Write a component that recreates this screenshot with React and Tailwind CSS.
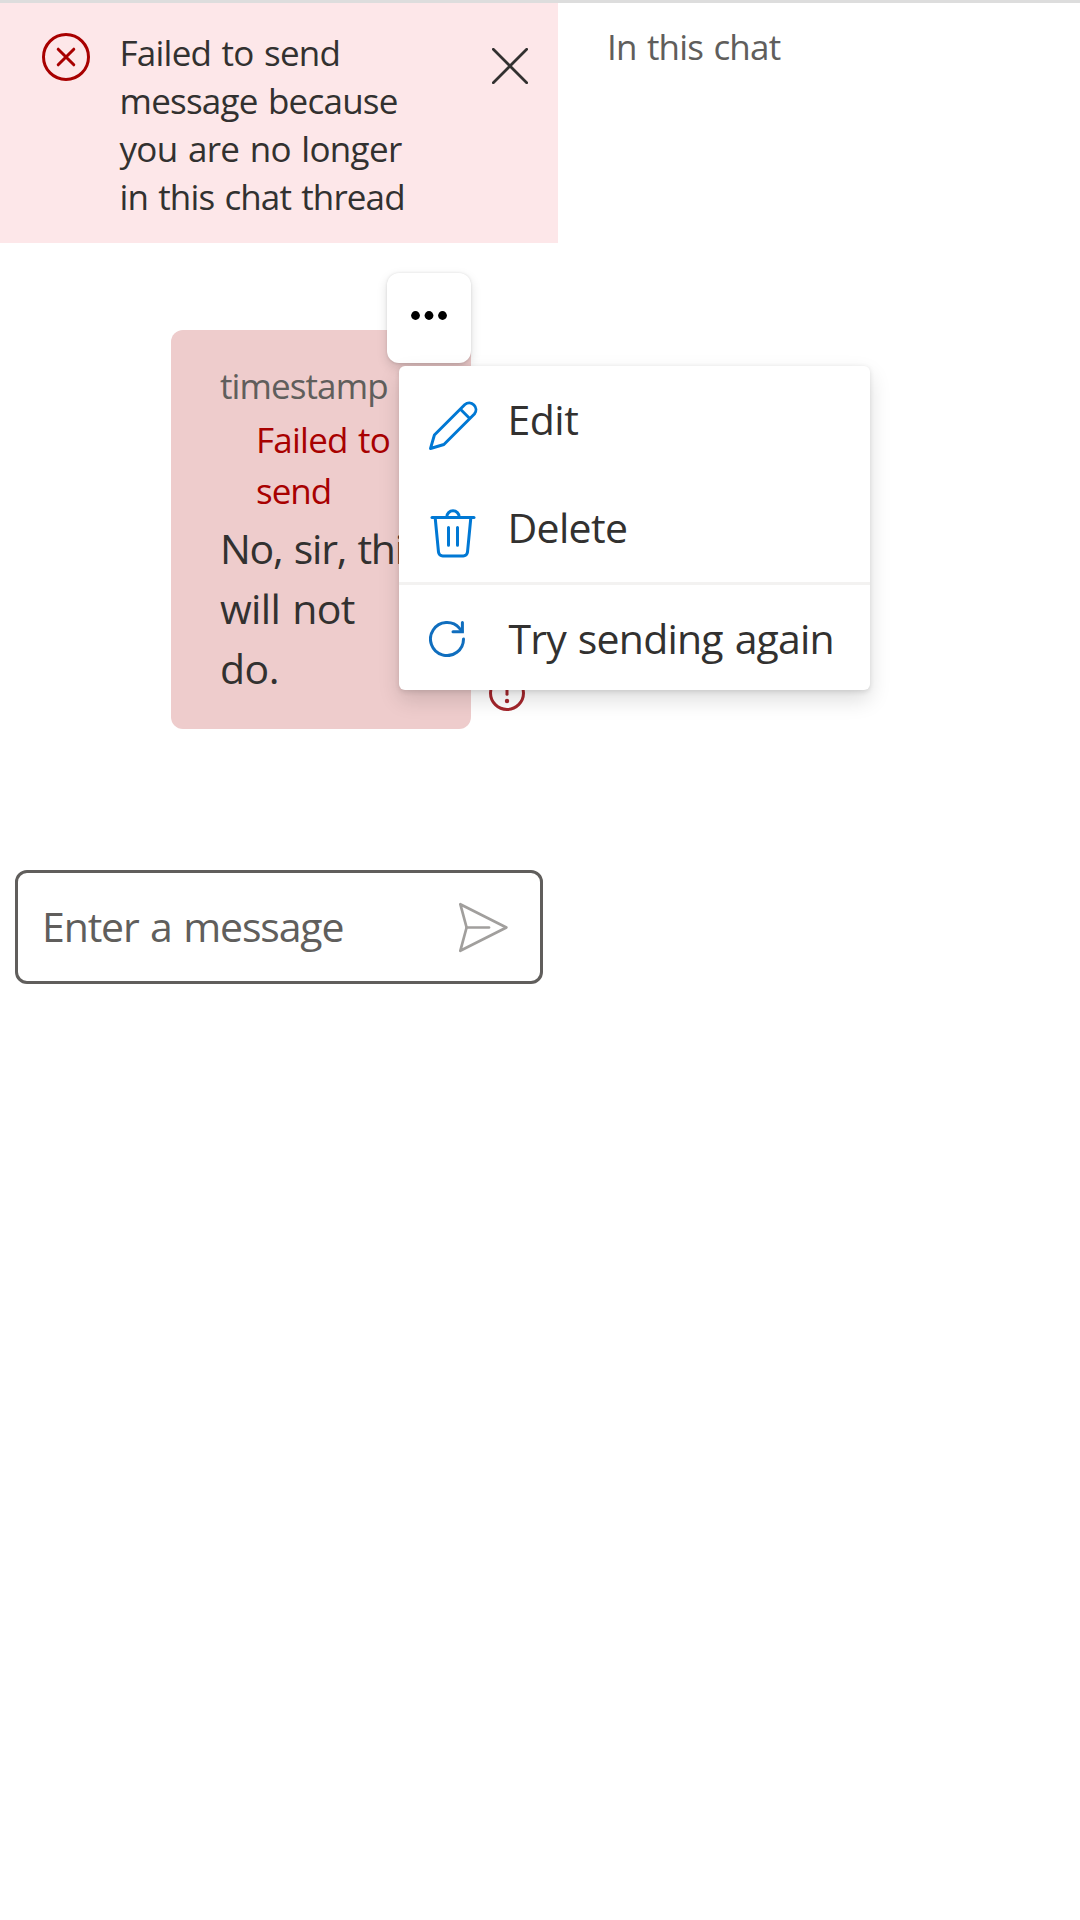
function ErrorBadgeIcon() {
  return (
    <svg className="block h-12 w-12" viewBox="0 0 48 48" fill="none" stroke="#a80000" strokeWidth="3" strokeLinecap="round">
      <circle cx="24" cy="24" r="22.5" />
      <path d="M16.2 16.2l15.6 15.6M31.8 16.2L16.2 31.8" />
    </svg>
  );
}

function CloseIcon() {
  return (
    <svg className="block h-9 w-9" viewBox="0 0 36 36" fill="none" stroke="#323130" strokeWidth="2.7" strokeLinecap="round">
      <path d="M1.3 1.3l33.4 33.4M34.7 1.3L1.3 34.7" />
    </svg>
  );
}

function MoreIcon() {
  return (
    <svg className="block h-[9px] w-9" viewBox="0 0 36 9" fill="#000">
      <circle cx="4.5" cy="4.5" r="4.4" />
      <circle cx="18" cy="4.5" r="4.4" />
      <circle cx="31.5" cy="4.5" r="4.4" />
    </svg>
  );
}

function EditIcon() {
  return (
    <svg className="block h-[60px] w-[60px]" viewBox="0 0 60 60" fill="none" stroke="#0078d4" strokeWidth="2.9" strokeLinejoin="round">
      <path d="M7.5 52.5L11.4 39 41.9 8.5A6.75 6.75 0 0 1 51.4 18L20.9 48.5Z" />
      <path d="M37.5 13.2l9.2 9.4" />
    </svg>
  );
}

function DeleteIcon() {
  return (
    <svg className="block h-[60px] w-[60px]" viewBox="0 0 60 60" fill="none" stroke="#0078d4" strokeWidth="3" strokeLinecap="round">
      <path d="M9 13.5h42" />
      <path d="M23.8 13a6.2 6.2 0 0 1 12.4 0" />
      <path d="M12.2 14l3.3 34.2a4.2 4.2 0 0 0 4.2 3.8h20.6a4.2 4.2 0 0 0 4.2-3.8L47.8 14" />
      <path d="M25.5 23.4v17.8M34.5 23.4v17.8" />
    </svg>
  );
}

function RetryIcon() {
  return (
    <svg className="block h-9 w-9" viewBox="0 0 36 36" fill="none" stroke="#106ebe" strokeWidth="3" strokeLinecap="round">
      <path d="M34.5 18A16.5 16.5 0 1 1 30.6 7.4L33 10" />
      <path d="M33.4 1.5v9.2H24" />
    </svg>
  );
}

function FailedStatusIcon() {
  return (
    <svg className="block h-9 w-9" viewBox="0 0 36 36" fill="none" stroke="#a4262c" strokeWidth="3" strokeLinecap="round">
      <circle cx="18" cy="18" r="16.5" />
      <path d="M18 10v9.2" />
      <circle cx="18" cy="26" r="2.2" fill="#a4262c" stroke="none" />
    </svg>
  );
}

function SendIcon() {
  return (
    <svg className="block h-[51px] w-[51px]" viewBox="0 0 51 51" fill="none" stroke="#a19f9d" strokeWidth="2.7" strokeLinejoin="round" strokeLinecap="round">
      <path d="M2.3 2.2L48.4 25.5 2.3 48.8 8.6 25.5Z" />
      <path d="M8.6 25.5H31" />
    </svg>
  );
}

function Banner() {
  return (
    <div className="flex h-60 w-[558px] items-start bg-[#fde7e9] pl-[42px] text-[35px] leading-[48px] text-[#323130]">
      <div className="mt-[30px]">
        <ErrorBadgeIcon />
      </div>
      <div className="mt-[26px] ml-[29.5px] w-[310px] whitespace-nowrap">
        <div className="tracking-[-0.75px]">Failed to send</div>
        <div className="tracking-[-0.77px]">message because</div>
        <div className="tracking-[-0.68px]">you are no longer</div>
        <div className="tracking-[-0.88px]">in this chat thread</div>
      </div>
      <button className="mt-[45px] ml-[62.5px]" aria-label="Dismiss">
        <CloseIcon />
      </button>
    </div>
  );
}

function ContextMenu() {
  return (
    <div className="absolute top-9 left-[228px] z-20 h-[324px] w-[471px] rounded-md bg-white text-[41px] text-[#323130] shadow-[0_9.6px_21.6px_rgba(0,0,0,0.132),0_1.8px_5.4px_rgba(0,0,0,0.108)]">
      <div className="flex h-[108px] pl-6">
        <div className="mt-[30px]">
          <EditIcon />
        </div>
        <span className="ml-[24.5px] leading-[106px] tracking-[-0.5px]">Edit</span>
      </div>
      <div className="flex h-[108px] pl-6">
        <div className="mt-[30px]">
          <DeleteIcon />
        </div>
        <span className="ml-[24.5px] leading-[106px] tracking-[-0.67px]">Delete</span>
      </div>
      <div className="h-[3px] bg-[#f3f2f1]" />
      <div className="flex h-[105px] pl-[30px]">
        <div className="mt-9">
          <RetryIcon />
        </div>
        <span className="ml-[43.5px] leading-[107px] tracking-[-0.8px] whitespace-nowrap">Try sending again</span>
      </div>
    </div>
  );
}

function FailedMessage() {
  return (
    <div className="relative mt-[87px] ml-[171px] flex h-[399px] w-[360px] items-start">
      <div className="h-[399px] w-[300px] rounded-xl bg-[#eecccc] pt-8 pl-[49px] whitespace-nowrap">
        <div className="text-[35px] leading-[48px] tracking-[-0.9px] text-[#605e5c]">timestamp</div>
        <div className="mt-1 ml-9 text-[35px] leading-[51px] text-[#a80000]">
          <div className="tracking-[-0.75px]">Failed to</div>
          <div className="tracking-[-1px]">send</div>
        </div>
        <div className="mt-[2px] text-[41px] leading-[60px] text-[#323130]">
          <div className="tracking-[-1.25px]">No, sir, this</div>
          <div className="tracking-[-0.65px]">will not</div>
          <div className="tracking-[-0.5px]">do.</div>
        </div>
      </div>
      <div className="mt-[345px] ml-[18px]">
        <FailedStatusIcon />
      </div>
      <button
        aria-label="More options"
        className="absolute -top-[57px] left-[216px] z-10 flex h-[90px] w-[84px] items-center justify-center rounded-xl bg-white pb-[6px] shadow-[0_4.8px_10.8px_rgba(0,0,0,0.132),0_0.9px_2.7px_rgba(0,0,0,0.108)]"
      >
        <MoreIcon />
      </button>
      <ContextMenu />
    </div>
  );
}

function Composer() {
  return (
    <div className="mt-[141px] ml-[15px] flex h-[114px] w-[528px] items-center justify-between rounded-xl border-[3px] border-[#605e5c] pr-[31px] pl-6">
      <span className="pb-[2px] text-[41px] leading-[60px] tracking-[-1.15px] whitespace-nowrap text-[#605e5c]">Enter a message</span>
      <button aria-label="Send">
        <SendIcon />
      </button>
    </div>
  );
}

export default function App() {
  return (
    <div className="flex h-[1920px] w-[1080px] overflow-hidden border-t-[3px] border-[#dddddd] bg-white font-['Open_Sans','Noto_Sans',sans-serif] [word-spacing:2px]">
      <main className="w-[558px] shrink-0">
        <Banner />
        <FailedMessage />
        <Composer />
      </main>
      <aside className="flex-1 pt-5 pl-[49px]">
        <h2 className="text-[35px] leading-[48px] tracking-[-0.81px] text-[#605e5c]">In this chat</h2>
      </aside>
    </div>
  );
}
